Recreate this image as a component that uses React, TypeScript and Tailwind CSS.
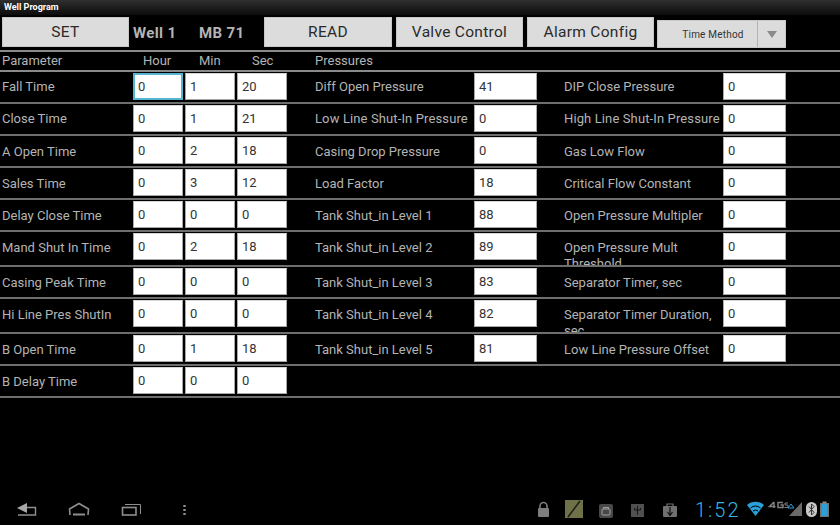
const rows = [
  { h: "h-[32px]", a: ["Fall Time", "0", "1", "20"], b: ["Diff Open Pressure", "41"], c: ["DIP Close Pressure", "0"] },
  { h: "h-[32px]", a: ["Close Time", "0", "1", "21"], b: ["Low Line Shut-In Pressure", "0"], c: ["High Line Shut-In Pressure", "0"] },
  { h: "h-[32px]", a: ["A Open Time", "0", "2", "18"], b: ["Casing Drop Pressure", "0"], c: ["Gas Low Flow", "0"] },
  { h: "h-[32px]", a: ["Sales Time", "0", "3", "12"], b: ["Load Factor", "18"], c: ["Critical Flow Constant", "0"] },
  { h: "h-[32px]", a: ["Delay Close Time", "0", "0", "0"], b: ["Tank Shut_in Level 1", "88"], c: ["Open Pressure Multipler", "0"] },
  { h: "h-[35px]", a: ["Mand Shut In Time", "0", "2", "18"], b: ["Tank Shut_in Level 2", "89"], c: ["Open Pressure Mult Threshold", "0"] },
  { h: "h-[32px]", a: ["Casing Peak Time", "0", "0", "0"], b: ["Tank Shut_in Level 3", "83"], c: ["Separator Timer, sec", "0"] },
  { h: "h-[35px]", a: ["Hi Line Pres ShutIn", "0", "0", "0"], b: ["Tank Shut_in Level 4", "82"], c: ["Separator Timer Duration, sec", "0"] },
  { h: "h-[32px]", a: ["B Open Time", "0", "1", "18"], b: ["Tank Shut_in Level 5", "81"], c: ["Low Line Pressure Offset", "0"] },
  { h: "h-[32px]", a: ["B Delay Time", "0", "0", "0"] },
];

function Field({ v, w, focus }: { v: string; w: string; focus?: boolean }) {
  return (
    <div
      className={`${w} h-[27px] shrink-0 bg-white text-[#333] text-[13px] flex items-center leading-none ${
        focus
          ? "border-2 border-[#55b4cf] pl-[3px]"
          : "border-x border-b border-[#a8a8a8] border-t-[#d8d8d8] border-t pl-[4px]"
      }`}
    >
      {v}
    </div>
  );
}

function Btn({ children, w }: { children: React.ReactNode; w: string }) {
  return (
    <div className={`${w} h-[30px] pt-[1px] shrink-0 bg-[#dcdcdc] border border-[#c8c8c8] flex items-center justify-center text-[#2a2a2a] text-[15.5px] tracking-[0.3px]`}>
      {children}
    </div>
  );
}

function Label({ t, w, pl, top }: { t: string; w: string; pl: string; top: string }) {
  const wide = t.includes("Shut-In");
  return (
    <div className={`${w} ${pl} ${top} shrink-0 self-stretch overflow-hidden text-[#b4b4b4] text-[13px] leading-[16px] ${wide ? "tracking-[0.12px]" : ""}`}>
      <span>{t}</span>
    </div>
  );
}

export default function App() {
  return (
    <div className="w-[840px] h-[525px] bg-black overflow-hidden flex flex-col font-['Roboto','Liberation_Sans',sans-serif]">
      <div className="h-[15px] bg-gradient-to-b from-[#303030] to-[#0c0c0c] flex items-center pl-[4px] text-white text-[9px] font-bold shrink-0">
        Well Program
      </div>
      <div className="flex items-start h-[35px] shrink-0 pt-[2px] pl-[2px]">
        <Btn w="w-[127px]">SET</Btn>
        <div className="w-[66px] ml-[4px] pt-[5px] text-[#b4b4b4] font-bold text-[15px] tracking-[0.35px] whitespace-nowrap">Well 1</div>
        <div className="w-[65px] pt-[5px] text-[#b4b4b4] font-bold text-[15px] tracking-[0.35px] whitespace-nowrap">MB 71</div>
        <Btn w="w-[128px]">READ</Btn>
        <div className="w-[4px]" />
        <Btn w="w-[127px]">Valve Control</Btn>
        <div className="w-[4px]" />
        <Btn w="w-[127px]">Alarm Config</Btn>
        <div className="w-[3px]" />
        <div className="w-[129px] h-[28px] mt-[3px] bg-[#dcdcdc] border border-[#c8c8c8] flex items-center shrink-0">
          <div className="w-[99px] text-center pl-[11px] text-[10px] text-[#333] tracking-[0.2px]">Time Method</div>
          <div className="flex-1 h-full border-l border-[#b4b4b4] flex items-center justify-center">
            <div className="w-0 h-0 border-l-[5px] border-r-[5px] border-t-[7px] border-l-transparent border-r-transparent border-t-[#8a8a8a]" />
          </div>
        </div>
      </div>
      <div className="h-[2px] bg-[#8a8a8a] shrink-0" />
      <div className="h-[18px] flex items-center text-[#b4b4b4] text-[13px] shrink-0">
        <div className="w-[133px] pl-[2px]">Parameter</div>
        <div className="w-[52px] pl-[10px]">Hour</div>
        <div className="w-[52px] pl-[14px]">Min</div>
        <div className="w-[78px] pl-[15px]">Sec</div>
        <div>Pressures</div>
      </div>
      <div className="h-[2px] bg-[#8a8a8a] shrink-0" />
      {rows.map((r, i) => {
        const top = i < 2 ? "pt-[6px]" : "pt-[7px]";
        return (
          <div key={i} className={`${r.h} shrink-0 border-b-2 border-[#6e6e6e] flex items-start pt-[1px]`}>
            <Label t={r.a[0]} w="w-[133px]" pl="pl-[2px]" top={top} />
            <div className="flex gap-[2px] w-[155px] shrink-0">
              <Field v={r.a[1]} w="w-[50px]" focus={i === 0} />
              <Field v={r.a[2]} w="w-[50px]" />
              <Field v={r.a[3]} w="w-[50px]" />
            </div>
            {r.b && (
              <>
                <Label t={r.b[0]} w="w-[186px]" pl="pl-[27px]" top={top} />
                <Field v={r.b[1]} w="w-[63px]" />
              </>
            )}
            {r.c && (
              <>
                <Label t={r.c[0]} w="w-[186px]" pl="pl-[27px]" top={top} />
                <Field v={r.c[1]} w="w-[63px]" />
              </>
            )}
          </div>
        );
      })}
      <div className="flex-1" />
      <div className="h-[30px] shrink-0 flex items-center justify-between">
        <svg width="220" height="30" viewBox="0 0 220 30" fill="none" stroke="#8f8f8f" strokeWidth="1.6">
          <path d="M26 12.500 H35.500 V20 H18" strokeWidth="1.400" />
          <path d="M17 13 L27 8 V18 Z" fill="#a8a8a8" stroke="none" />
          <path d="M70 20 L69.500 14 L79 8.500 L88.500 14 L88 20" />
          <path d="M73 19.500 H85" strokeWidth="2" />
          <rect x="122.500" y="12.500" width="13.500" height="7.500" />
          <path d="M125 9.500 H140.500 V19" strokeWidth="1" />
          <path d="M184.500 10 V12 M184.500 14 V16 M184.500 18 V20" strokeWidth="2.400" />
        </svg>
        <div className="flex items-center h-full">
          <svg width="165" height="30" viewBox="0 0 165 30" fill="none">
            <rect x="8" y="13" width="11" height="9" rx="1" fill="#7d7d7d" />
            <path d="M10 13 V11 a3.500 3.500 0 0 1 7 0 V13" stroke="#7d7d7d" strokeWidth="1.600" />
            <rect x="35" y="5" width="18" height="18" fill="#6f7248" />
            <path d="M38 22 L50 6" stroke="#1c1c1c" strokeWidth="1.500" />
            <rect x="69" y="9" width="14" height="14" rx="2" fill="#484848" />
            <rect x="72" y="14" width="8" height="6" rx="1" stroke="#a0a0a0" strokeWidth="1" />
            <path d="M73.500 14 V12.500 H78.500 V14" stroke="#a0a0a0" strokeWidth="1" />
            <rect x="101" y="9" width="13" height="13" fill="#505050" />
            <path d="M107.500 11 V20 M104.500 13 V15 H110.500 V13" stroke="#151515" strokeWidth="1" />
            <rect x="133" y="11" width="14" height="11" rx="1" fill="#707070" />
            <path d="M137 11 V9 H143 V11" stroke="#707070" strokeWidth="1.200" />
            <path d="M140 12 V20 M137.500 17 L140 20.500 L142.500 17" stroke="#111" strokeWidth="1.200" />
          </svg>
          <span className="w-[52px] -mt-[1px] font-light text-[#33b5e5] text-[20px] tracking-[2px] leading-none whitespace-nowrap">1:52</span>
          <svg width="93" height="30" viewBox="0 0 93 30" fill="none">
            <path d="M0 10 a13 13 0 0 1 17 0 L8.500 21 Z" fill="#2b9fd8" />
            <path d="M3.500 13 a8 8 0 0 1 10 0 M6 16 a4 4 0 0 1 5 0" stroke="#000" strokeWidth="1" />
            <path d="M27 7 L22.500 11.500 H28.500 M27 7 V13" stroke="#808080" strokeWidth="1.500" />
            <path d="M36 7.500 H31 V12.500 H36 V10 H33.500" stroke="#808080" strokeWidth="1.500" />
            <path d="M41 8 H38 V10 H41 V12.500 H37.500" stroke="#808080" strokeWidth="1" />
            <path d="M44 9 L47 13 H41 Z" stroke="#2b9fd8" strokeWidth="1" />
            <path d="M42 21 H55 V7 Z" fill="#6a6a6a" />
            <rect x="59" y="7" width="11" height="15" rx="5.500" fill="#c8c8c8" />
            <path d="M62 11.500 L67 17.500 L64.500 20 V9 L67 11.500 L62 17.500" stroke="#333" strokeWidth="1" />
            <rect x="73" y="8" width="9" height="14" fill="#707070" />
            <rect x="75.500" y="6.500" width="4" height="2" fill="#8a8a8a" />
            <rect x="74.500" y="9" width="6" height="12" fill="#2b9fd8" />
          </svg>
        </div>
      </div>
    </div>
  );
}
